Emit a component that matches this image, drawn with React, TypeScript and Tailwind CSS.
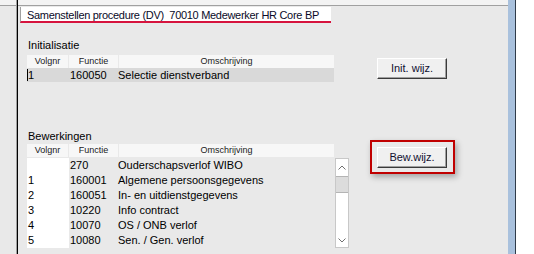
import React from "react";

type Row = { volgnr: string; functie: string; omschrijving: string };

const bewerkingen: Row[] = [
  { volgnr: "", functie: "270", omschrijving: "Ouderschapsverlof WIBO" },
  { volgnr: "1", functie: "160001", omschrijving: "Algemene persoonsgegevens" },
  { volgnr: "2", functie: "160051", omschrijving: "In- en uitdienstgegevens" },
  { volgnr: "3", functie: "10220", omschrijving: "Info contract" },
  { volgnr: "4", functie: "10070", omschrijving: "OS / ONB verlof" },
  { volgnr: "5", functie: "10080", omschrijving: "Sen. / Gen. verlof" },
];

function HeaderRow() {
  return (
    <div className="flex gap-[1px] h-[13px] text-[9px] leading-[13px] text-[#1a1a1a]">
      <div className="w-[41px] bg-[#f7f7f7] text-center">Volgnr</div>
      <div className="w-[49px] bg-[#f7f7f7] text-center">Functie</div>
      <div className="w-[215px] bg-[#f7f7f7] text-center">Omschrijving</div>
    </div>
  );
}

function WinButton({ label }: { label: string }) {
  return (
    <button className="w-[70px] h-[21px] bg-[#f0f0f0] border border-t-white border-l-white border-b-[#3a3a3a] border-r-[#3a3a3a] shadow-[inset_-1px_-1px_0_#a0a0a0] text-[11px] leading-[19px] text-[#101030] text-center">
      {label}
    </button>
  );
}

function Chevron({ up }: { up: boolean }) {
  return (
    <svg width="8" height="5" viewBox="0 0 8 5">
      <polyline
        points={up ? "0.5,4.5 4,1 7.5,4.5" : "0.5,0.5 4,4 7.5,0.5"}
        fill="none"
        stroke="#707070"
        strokeWidth="1"
      />
    </svg>
  );
}

function ScrollBar() {
  return (
    <div className="w-[14px] h-[90px] bg-white border border-[#c8c8c8] flex flex-col">
      <div className="h-[17px] flex items-center justify-center">
        <Chevron up />
      </div>
      <div className="h-[17px] bg-[#dcdcdc] border-y border-[#b4b4b4]" />
      <div className="flex-1" />
      <div className="h-[14px] flex items-center justify-center">
        <Chevron up={false} />
      </div>
    </div>
  );
}

export default function App() {
  return (
    <div className="w-[534px] h-[254px] flex bg-white overflow-hidden font-['Liberation_Sans',Arial,sans-serif] text-[11px] text-black">
      <div className="w-[508px] h-full flex bg-[#e9e9e9]">
        <div className="w-[16px] flex flex-col">
          <div className="h-[6px] bg-[#f3f3f3] border-b border-[#a0a0a0]" />
        </div>
        <div className="w-px bg-[#a0a0a0]" />
        <div className="w-px bg-black" />
        <div className="flex-1 flex flex-col">
          <div className="h-[6px] bg-[#f3f3f3] border-b border-[#a0a0a0]" />

          {/* title */}
          <div className="ml-[2px] mt-[1px] w-[311px] h-[16px] overflow-hidden bg-white border-l border-[#a0a0a0] border-b-2 border-b-[#d6143e] pl-[6px] pt-[2px] leading-[12px] tracking-[-0.3px] whitespace-pre text-[#0a0a28]">
            Samenstellen procedure (DV)  70010 Medewerker HR Core BP
          </div>

          {/* Initialisatie */}
          <div className="flex items-start ml-[9px] mt-[16px]">
            <div className="w-[307px] flex flex-col">
              <div className="h-[13px] leading-[13px] pl-[1px]">Initialisatie</div>
              <div className="mt-[3px]">
                <HeaderRow />
              </div>
              <div className="flex h-[14px] leading-[14px] bg-[#d9d9d9]">
                <div className="w-[42px] flex items-center">
                  <span className="w-px h-[12px] bg-black" />
                  <span>1</span>
                </div>
                <div className="w-[49px] pl-[1px]">160050</div>
                <div className="flex-1">Selectie dienstverband</div>
              </div>
            </div>
            <div className="ml-[43px] mt-[19px]">
              <WinButton label="Init. wijz." />
            </div>
          </div>

          {/* Bewerkingen */}
          <div className="flex items-start ml-[9px] mt-[48px]">
            <div className="w-[322px] flex flex-col">
              <div className="h-[13px] leading-[13px] pl-[1px]">Bewerkingen</div>
              <div className="mt-[1px]">
                <HeaderRow />
              </div>
              <div className="flex mt-[1px] gap-[1px]">
                <div className="w-[307px] flex flex-col">
                  {bewerkingen.map((r) => (
                    <div key={r.functie} className="flex h-[15px] leading-[15px]">
                      <div className="w-[42px] bg-white pl-[1px]">{r.volgnr}</div>
                      <div className="w-[49px] pl-[1px]">{r.functie}</div>
                      <div className="flex-1">{r.omschrijving}</div>
                    </div>
                  ))}
                </div>
                <ScrollBar />
              </div>
            </div>
            <div className="ml-[21px] mt-[10px] w-[85px] h-[34px] border-2 border-[#c00000] pl-[5px] pt-[5px] shadow-[2px_3px_6px_rgba(0,0,0,0.3)]">
              <WinButton label="Bew.wijz." />
            </div>
          </div>
        </div>
      </div>
      <div className="w-[7px] bg-[#a9c1dd]" />
      <div className="w-px bg-[#2f3b4a]" />
      <div className="flex-1 bg-white" />
    </div>
  );
}
